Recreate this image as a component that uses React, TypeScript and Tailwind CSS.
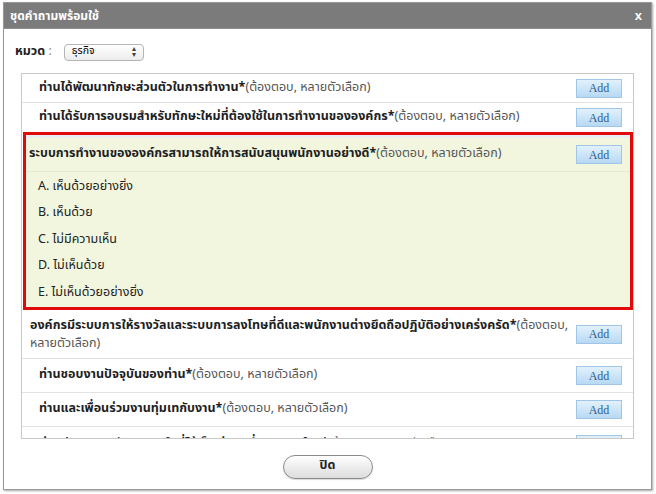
import React from 'react'

const note = '(ต้องตอบ, หลายตัวเลือก)'

function AddButton() {
  return (
    <button className="w-[46px] h-[19px] shrink-0 border border-[#9fc6e6] bg-gradient-to-b from-[#e2f1fc] to-[#b7d9f3] text-[12px] leading-none text-[#2d5d8c] font-['Liberation_Serif',serif]">
      Add
    </button>
  )
}

function Question({ title, pad = 'pl-[17px]' }: { title: string; pad?: string }) {
  return (
    <span className={`${pad} flex-1`}>
      <span className="font-bold text-[#1e1e1e]">{title}*</span>
      <span className="text-[#555]">{note}</span>
    </span>
  )
}

export default function App() {
  const options = [
    'A. เห็นด้วยอย่างยิ่ง',
    'B. เห็นด้วย',
    'C. ไม่มีความเห็น',
    'D. ไม่เห็นด้วย',
    'E. ไม่เห็นด้วยอย่างยิ่ง',
  ]

  return (
    <div className="w-[656px] h-[494px] bg-white pt-[2px] pl-[3px] font-['Tahoma','Noto_Sans_Thai','Noto_Sans',sans-serif] text-[12.5px]">
      <div className="w-[649px] h-[488px] flex flex-col border border-[#9a9a9a] shadow-[1px_1px_2px_rgba(0,0,0,0.35)] bg-white">
        {/* title bar */}
        <div className="h-[26px] shrink-0 flex items-center justify-between px-[6px] bg-[#7b7b7b] border-b border-[#8e8e8e]">
          <span className="text-white font-bold text-[12px]">ชุดคำถามพร้อมใช้</span>
          <span className="text-white font-bold text-[13px] leading-none pr-[3px] font-['Liberation_Sans',sans-serif]">x</span>
        </div>

        {/* category */}
        <div className="flex items-center h-[44px] shrink-0 pl-[11px] gap-[12px] pt-[2px]">
          <span className="font-bold text-[12.5px] text-[#222]">
            หมวด <span className="font-normal text-[#888]">:</span>
          </span>
          <div className="w-[80px] h-[17px] flex items-center justify-between px-[7px] rounded-[4px] border border-[#b5b5b5] bg-gradient-to-b from-white to-[#ececec] text-[10.5px]">
            <span>ธุรกิจ</span>
            <span className="text-[8px] leading-[6px] text-[#444] flex flex-col items-center">
              <span>▴</span>
              <span>▾</span>
            </span>
          </div>
        </div>

        {/* question list */}
        <div className="ml-[17px] w-[613px] h-[366px] shrink-0 border border-[#c9c9c9] overflow-hidden">
          <div className="h-[29px] flex items-center pr-[11px] border-b border-[#e3e3e3]">
            <Question title="ท่านได้พัฒนาทักษะส่วนตัวในการทำงาน" />
            <AddButton />
          </div>
          <div className="h-[29px] flex items-center pr-[11px]">
            <Question title="ท่านได้รับการอบรมสำหรับทักษะใหม่ที่ต้องใช้ในการทำงานขององค์กร" />
            <AddButton />
          </div>

          {/* highlighted */}
          <div className="ml-[1px] w-[610px] h-[178px] border-[3px] border-[#e00a0a] bg-[#f2f6df]">
            <div className="h-[37px] flex items-center pr-[8px] border-b border-[#e2e8d2] border-t-[3px] border-t-[#e8eff2]">
              <Question title="ระบบการทำงานขององค์กรสามารถให้การสนับสนุนพนักงานอย่างดี" pad="pl-[3px]" />
              <AddButton />
            </div>
            <div className="flex flex-col pt-[2px]">
              {options.map(o => (
                <div key={o} className="h-[26.5px] flex items-center pl-[12px] text-[#222]">
                  {o}
                </div>
              ))}
            </div>
          </div>

          <div className="h-[49px] flex items-center pr-[11px] border-b border-[#e3e3e3]">
            <span className="pl-[8px] flex-1 leading-[18px] pt-[2px]">
              <span className="font-bold text-[#1e1e1e]">องค์กรมีระบบการให้รางวัลและระบบการลงโทษที่ดีและพนักงานต่างยึดถือปฏิบัติอย่างเคร่งครัด*</span>
              <span className="text-[#555]">(ต้องตอบ,<br />หลายตัวเลือก)</span>
            </span>
            <AddButton />
          </div>
          <div className="h-[34px] flex items-center pr-[11px] border-b border-[#e3e3e3]">
            <Question title="ท่านชอบงานปัจจุบันของท่าน" />
            <AddButton />
          </div>
          <div className="h-[34px] flex items-center pr-[11px] border-b border-[#e3e3e3]">
            <Question title="ท่านและเพื่อนร่วมงานทุ่มเทกับงาน" />
            <AddButton />
          </div>
          <div className="h-[34px] flex items-center pr-[11px]">
            <Question title="ท่านมีความผูกพันและภูมิใจที่ได้เป็นส่วนหนึ่งขององค์กร" />
            <AddButton />
          </div>
        </div>

        {/* footer */}
        <div className="flex-1 flex items-center justify-center pt-[5px]">
          <button className="w-[90px] h-[24px] rounded-full border border-[#8a8a8a] bg-gradient-to-b from-white to-[#dcdcdc] font-bold text-[12.5px] text-[#222] shadow-[0_1px_1px_rgba(0,0,0,0.15)]">
            ปิด
          </button>
        </div>
      </div>
    </div>
  )
}
